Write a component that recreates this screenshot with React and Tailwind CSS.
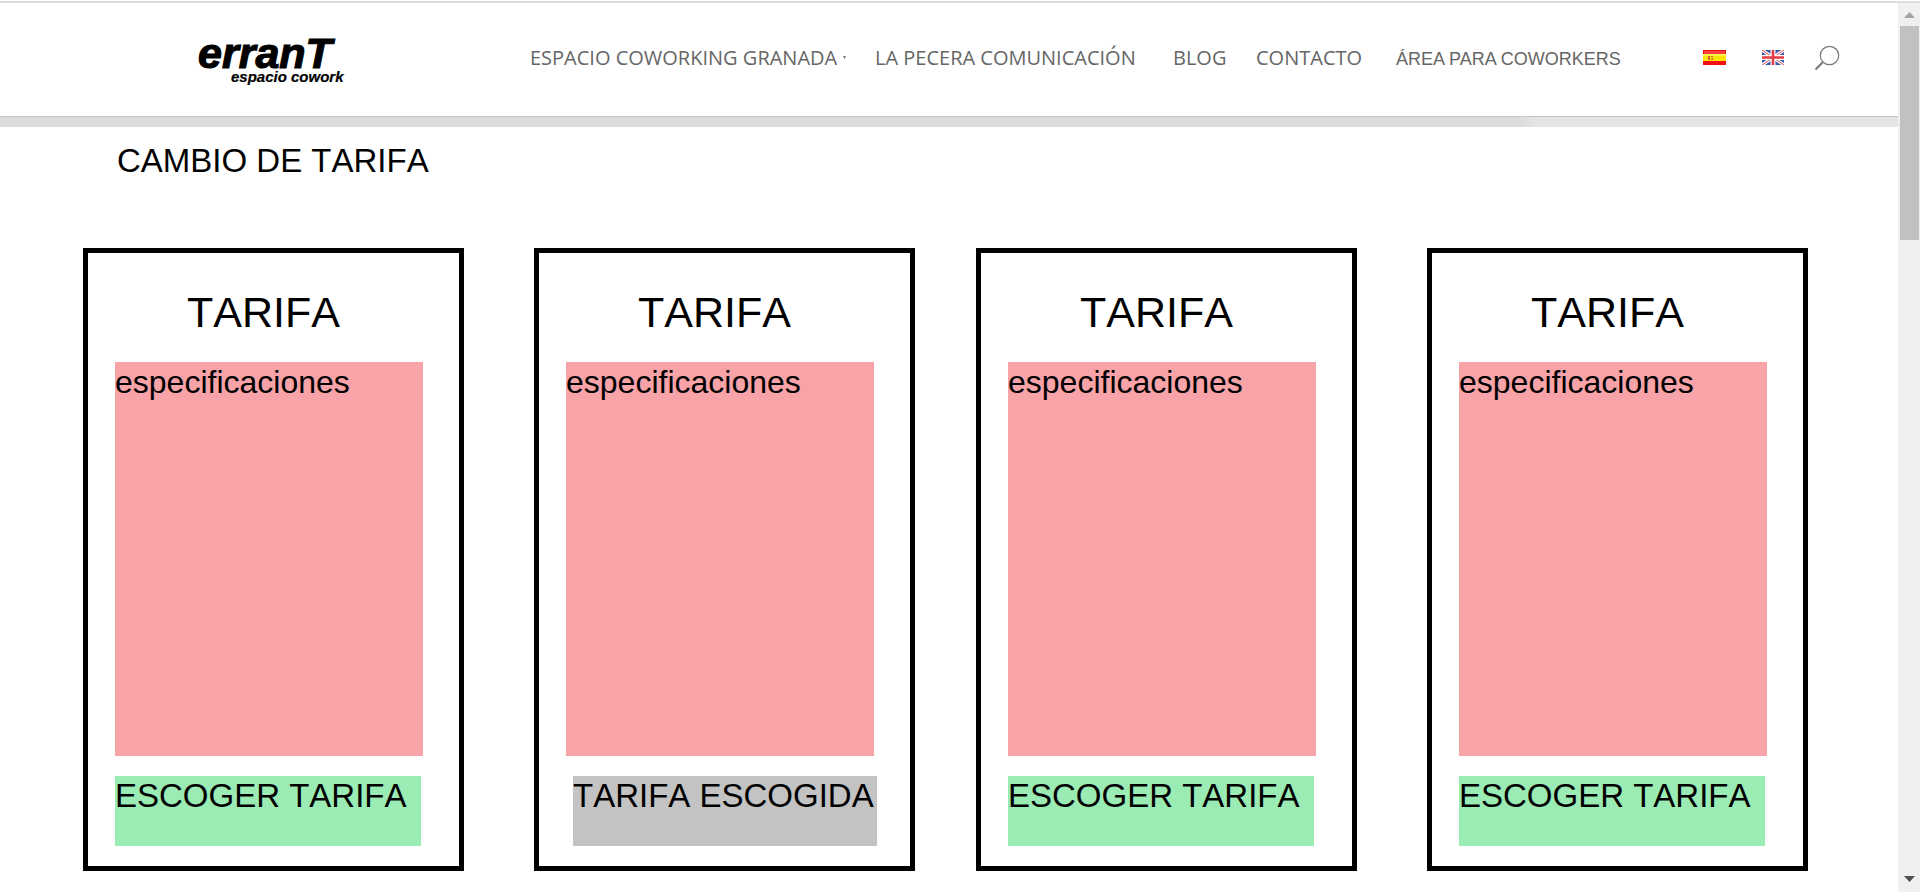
import React from "react";

const links = [
  { label: "ESPACIO COWORKING GRANADA", box: "w-[345px]", type: "font-['Open_Sans',sans-serif] text-[20px]", menu: true },
  { label: "LA PECERA COMUNICACIÓN", box: "w-[298px]", type: "font-['Open_Sans',sans-serif] text-[20px]" },
  { label: "BLOG", box: "w-[83px]", type: "font-['Open_Sans',sans-serif] text-[20px]" },
  { label: "CONTACTO", box: "w-[140px]", type: "font-['Open_Sans',sans-serif] text-[20px]" },
  { label: "ÁREA PARA COWORKERS", box: "w-[307px]", type: "font-['Liberation_Sans',Arial,sans-serif] text-[18px]" },
];

function Logo() {
  return (
    <a href="#inicio" aria-label="errant espacio cowork" className="ml-[198px] flex w-[332px] shrink-0">
      <svg width="152" height="60" viewBox="0 0 152 60" fontFamily="'Liberation Sans', Arial, sans-serif" fontWeight="700" fontStyle="italic" stroke="#000">
        <text x="0" y="40" fontSize="43" strokeWidth="1.2">erranT</text>
        <text x="33" y="54" fontSize="15" strokeWidth="0.2">espacio cowork</text>
      </svg>
    </a>
  );
}

function SpainFlag() {
  return (
    <svg width="23" height="15" viewBox="0 0 23 15">
      <rect width="23" height="15" fill="#f01010" />
      <rect x="1" y="1" width="21" height="3" fill="#f84040" />
      <rect y="4" width="23" height="7" fill="#ffe600" />
      <rect y="4" width="23" height="2" fill="#fff04a" />
      <path d="M5 6h2v4H5zM8 6h2v1H8zM9 8h1v2H8z" fill="#d9622b" />
    </svg>
  );
}

function BritainFlag() {
  return (
    <svg width="22" height="15" viewBox="0 0 22 15">
      <rect width="22" height="15" fill="#3c55a5" />
      <path d="M0 0L22 15M22 0L0 15" stroke="#fff" strokeWidth="3.2" />
      <path d="M0 0L22 15M22 0L0 15" stroke="#e0525c" strokeWidth="1" />
      <path d="M11 0V15M0 7.5H22" stroke="#fff" strokeWidth="5" />
      <path d="M11 0V15M0 7.5H22" stroke="#e63946" strokeWidth="2.6" />
    </svg>
  );
}

function Header() {
  return (
    <header>
      <div className="flex h-[113px] items-center pb-1">
        <Logo />
        <nav className="flex items-baseline text-[#666]">
          {links.map((l) => (
            <a key={l.label} href="#menu" className={`${l.box} ${l.type} flex shrink-0 items-center gap-1.5 whitespace-nowrap`}>
              {l.label}
              {l.menu && (
                <svg width="3" height="4" viewBox="0 0 3 4"><path d="M0 0h3L1.5 3z" fill="#777" /></svg>
              )}
            </a>
          ))}
        </nav>
        <a href="#es" aria-label="Español" className="mr-9 shrink-0"><SpainFlag /></a>
        <a href="#en" aria-label="English" className="mr-[30px] shrink-0"><BritainFlag /></a>
        <button type="button" aria-label="Buscar" className="shrink-0">
          <svg width="26" height="26" viewBox="0 0 26 26" fill="none" stroke="#777">
            <circle cx="15.5" cy="10.5" r="9.2" strokeWidth="1.2" />
            <path d="M8.8 17.2L1.5 24.5" strokeWidth="2" />
          </svg>
        </button>
      </div>
      <div className="h-[11px] border-t border-[#c4c4c4] bg-linear-to-r from-[#dcdcdc] from-80% to-[#e5e5e5] to-81%" />
    </header>
  );
}

function Card({ chosen }) {
  return (
    <section className="flex min-w-0 flex-1 flex-col border-5 border-black bg-white pt-5 pr-9 pb-5 pl-[27px]">
      <h2 className="pt-2 pl-[72px] text-[43px] leading-[62px]">TARIFA</h2>
      <div className="mt-[19px] h-[394px] bg-[#f8a3a8] text-[32px] leading-[40px]">especificaciones</div>
      <button
        type="button"
        className={`mt-5 flex h-[70px] text-left text-[33px] leading-[40px] whitespace-nowrap ${chosen ? "-mr-[3px] ml-[7px] bg-[#c3c3c3]" : "mr-0.5 bg-[#9aebb4]"}`}
      >
        {chosen ? "TARIFA ESCOGIDA" : "ESCOGER TARIFA"}
      </button>
    </section>
  );
}

function Scrollbar() {
  return (
    <div aria-hidden="true" className="flex w-[22px] shrink-0 flex-col items-center justify-between bg-[#f0f0f0]">
      <div className="flex flex-col items-center">
        <svg width="19" height="23" viewBox="0 0 19 23"><path d="M4 15h11L9.5 9z" fill="#a3a3a3" /></svg>
        <div className="h-[214px] w-[19px] bg-[#c1c1c1]" />
      </div>
      <svg width="19" height="21" viewBox="0 0 19 21"><path d="M4 5h11L9.5 11z" fill="#505050" /></svg>
    </div>
  );
}

export default function App() {
  return (
    <div className="min-h-screen bg-white pt-px font-['Liberation_Sans',Arial,sans-serif] text-black">
      <div className="mr-1 h-0.5 bg-[#dcdde3]" />
      <div className="mr-1 flex min-h-[889px]">
        <div className="min-w-0 flex-1">
          <Header />
          <main className="pr-[90px] pl-[83px] [font-kerning:none]">
            <h1 className="pt-3.5 pl-[34px] text-[33px] leading-[40px]">CAMBIO DE TARIFA</h1>
            <div className="mt-[67px] flex gap-[61px]">
              <div className="flex flex-1 gap-[70px]">
                <Card />
                <Card chosen />
              </div>
              <div className="flex flex-1 gap-[70px]">
                <Card />
                <Card />
              </div>
            </div>
          </main>
        </div>
        <Scrollbar />
      </div>
    </div>
  );
}
